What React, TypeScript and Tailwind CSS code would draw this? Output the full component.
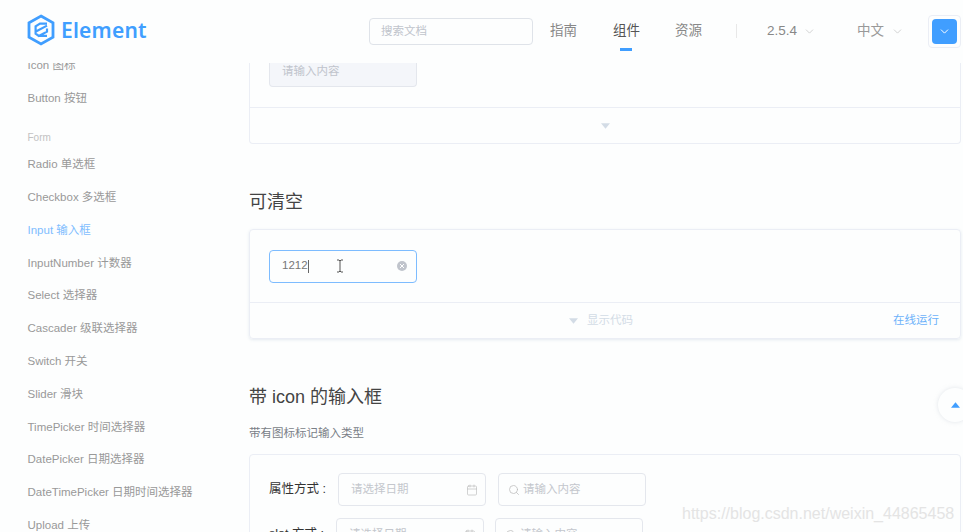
import React from "react";
import { ChevronDown, Search, Calendar } from "lucide-react";

const font = { fontFamily: '"Liberation Sans","Noto Sans CJK SC",sans-serif' };

const before = ["Icon 图标", "Button 按钮"];
const items = [
  "Radio 单选框",
  "Checkbox 多选框",
  "Input 输入框",
  "InputNumber 计数器",
  "Select 选择器",
  "Cascader 级联选择器",
  "Switch 开关",
  "Slider 滑块",
  "TimePicker 时间选择器",
  "DatePicker 日期选择器",
  "DateTimePicker 日期时间选择器",
  "Upload 上传",
];

function Logo() {
  return (
    <svg width="28" height="32" viewBox="0 0 28 32" fill="none" className="shrink-0">
      <path d="M14 2 L26 8.8 V23.2 L14 30 L2 23.2 V8.8 Z" stroke="#409eff" strokeWidth="2.8" />
      <path d="M20 9.6 L13 9.6 L8.6 12.4 V19.6 L11.8 22 L20 17.6 V14.4 M9.4 17.2 L20 11.6 M12 21.8 L20 21.8" stroke="#409eff" strokeWidth="2.2" />
    </svg>
  );
}

function Triangle({ up = false, color }: { up?: boolean; color: string }) {
  return (
    <svg width="9" height="6" viewBox="0 0 10 6" className="shrink-0">
      <path d={up ? "M5 0 L10 6 H0 Z" : "M0 0 H10 L5 6 Z"} fill={color} />
    </svg>
  );
}

function Field({ text, left, right }: { text: string; left?: React.ReactNode; right?: React.ReactNode }) {
  return (
    <div className={`h-[33px] w-[148px] shrink-0 rounded border border-[#e4e7ed] flex items-center gap-[3px] ${left ? "pl-[9px]" : "pl-[12px]"} pr-[7px]`}>
      {left}
      <span className="text-[11.5px] text-[#c4c7cd] flex-1">{text}</span>
      {right}
    </div>
  );
}

export default function App() {
  return (
    <div style={font} className="relative h-[532px] w-[963px] overflow-hidden bg-[#fdfefe] flex flex-col">
      <header className="h-[63px] shrink-0 flex items-start bg-[#fdfefe] relative z-10">
        <div className="ml-[27px] mt-[14px] flex items-center gap-[6px] w-[342px]">
          <Logo />
          <span className="text-[21px] leading-[32px] font-semibold text-[#409eff] tracking-[0.2px]" style={{ fontFamily: '"Noto Sans",sans-serif' }}>Element</span>
        </div>
        <div className="mt-[18px] h-[27px] w-[164px] rounded border border-[#dfe3e9] flex items-center pl-[11px] text-[11.5px] text-[#c0c4cc]">搜索文档</div>
        <nav className="flex text-[13.5px] text-[#888] mt-[22px] ml-[17px]">
          <span className="w-[63px] leading-[18px]">指南</span>
          <span className="w-[62px] leading-[18px] text-[#555] flex flex-col">
            组件
            <span className="block mt-[8px] ml-[7px] w-[12px] h-[3px] bg-[#409eff]" />
          </span>
          <span className="w-[61px] leading-[18px]">资源</span>
        </nav>
        <div className="mt-[24px] h-[14px] w-px bg-[#e8e8e8]" />
        <div className="mt-[22px] ml-[30px] flex items-center h-[18px] w-[90px] text-[13.5px] text-[#888]">
          2.5.4<ChevronDown size={13} strokeWidth={1.2} className="ml-[6px] text-[#bbb]" />
        </div>
        <div className="mt-[22px] flex items-center h-[18px] w-[71px] text-[13.5px] text-[#999]">
          中文<ChevronDown size={13} strokeWidth={1.2} className="ml-[7px] text-[#bbb]" />
        </div>
        <div className="mt-[15px] h-[33px] w-[33px] rounded border border-[#ebeef5] flex items-center justify-center">
          <div className="h-[25px] w-[25px] rounded-sm bg-[#409eff] flex items-center justify-center">
            <ChevronDown size={13} strokeWidth={1.8} className="text-white" />
          </div>
        </div>
      </header>

      <div className="flex flex-1 min-h-0 overflow-hidden">
        <aside className="w-[249px] shrink-0 pl-[27.5px] -mt-[14px] text-[11.5px] text-[#999]">
          {before.map((t) => (
            <div key={t} className="h-[33px] leading-[33px]">{t}</div>
          ))}
          <div className="h-[23px] mt-[10.2px] pt-px leading-[23px] text-[10px] text-[#c2c2c2]">Form</div>
          {items.map((t) => (
            <div key={t} className={`h-[32.8px] leading-[32.8px] whitespace-nowrap ${t.startsWith("Input 输") ? "text-[#7fbdff]" : ""}`}>{t}</div>
          ))}
        </aside>

        <main className="w-[712px] shrink-0">
          <section className="h-[81px] border border-t-0 border-[#ebeef5] rounded-b flex flex-col">
            <div className="h-[45px] border-b border-[#ebeef5] pl-[19px]">
              <div className="h-[24px] w-[148px] rounded-b border border-t-0 border-[#e4e7ed] bg-[#f4f6fa] text-[11.5px] text-[#c0c4cc] pl-[12px] leading-[16px]">请输入内容</div>
            </div>
            <div className="flex-1 flex items-center justify-center">
              <Triangle color="#d3dce6" />
            </div>
          </section>

          <h2 className="mt-[45px] text-[18px] leading-[26px] text-[#444]">可清空</h2>

          <section className="mt-[14px] h-[110px] border border-[#ebeef5] rounded shadow-[0_1px_3px_rgba(200,210,225,0.45)] flex flex-col">
            <div className="h-[73px] border-b border-[#ebeef5] pl-[19px] pt-[19.5px]">
              <div className="relative h-[33px] w-[148px] rounded border border-[#7dbcff] flex items-center pl-[12px] pr-[9px]">
                <span className="text-[11.5px] text-[#777]">1212</span>
                <span className="h-[13px] w-px bg-[#666]" />
                <span className="flex-1" />
                <span className="h-[10px] w-[10px] rounded-full bg-[#c0c4cc] flex items-center justify-center">
                  <svg width="6" height="6" viewBox="0 0 6 6"><path d="M1 1 L5 5 M5 1 L1 5" stroke="#fff" strokeWidth="1" /></svg>
                </span>
                <svg width="8" height="14" viewBox="0 0 8 14" className="absolute left-[66px] top-[8px]" fill="none">
                  <path d="M1 1 H3 L4 2 L5 1 H7 M4 2 V12 M1 13 H3 L4 12 L5 13 H7" stroke="#555" strokeWidth="1" />
                </svg>
              </div>
            </div>
            <div className="flex-1 relative flex items-center justify-center gap-[9px] pr-[8px]">
              <Triangle color="#d3dce6" />
              <span className="text-[11.5px] text-[#d3dce6]">显示代码</span>
              <span className="absolute right-[21px] text-[11.5px] text-[#6cb2fa]">在线运行</span>
            </div>
          </section>

          <h2 className="mt-[45px] text-[18px] leading-[26px] text-[#444]">带 icon 的输入框</h2>
          <p className="mt-[16px] text-[11.5px] leading-[14px] text-[#7a7f87]">带有图标标记输入类型</p>
          <section className="mt-[14px] border border-[#ebeef5] rounded pl-[19px] pt-[18px] h-[120px]">
            <div className="flex items-center">
              <span className="w-[69px] shrink-0 text-[12.5px] text-[#333]">属性方式 :</span>
              <Field text="请选择日期" right={<Calendar size={12} strokeWidth={1.3} className="text-[#bbb]" />} />
              <span className="w-[12px]" />
              <Field text="请输入内容" left={<Search size={12} strokeWidth={1.5} className="text-[#bbb]" />} />
            </div>
            <div className="flex items-center mt-[12px]">
              <span className="w-[67px] shrink-0 text-[12.5px] text-[#333]">slot 方式 :</span>
              <Field text="请选择日期" right={<Calendar size={12} strokeWidth={1.3} className="text-[#bbb]" />} />
              <span className="w-[11px]" />
              <Field text="请输入内容" left={<Search size={12} strokeWidth={1.5} className="text-[#bbb]" />} />
            </div>
          </section>
        </main>
      </div>

      <div className="absolute left-[938px] top-[388px] h-[34px] w-[34px] rounded-full bg-[#fdfefe] shadow-[0_0_4px_rgba(200,205,215,0.5)] flex items-center justify-center">
        <Triangle up color="#409eff" />
      </div>
      <div className="absolute left-[682px] top-[504px] text-[16px] leading-[20px] text-[#e4e4e4] whitespace-nowrap">https://blog.csdn.net/weixin_44865458</div>
    </div>
  );
}
